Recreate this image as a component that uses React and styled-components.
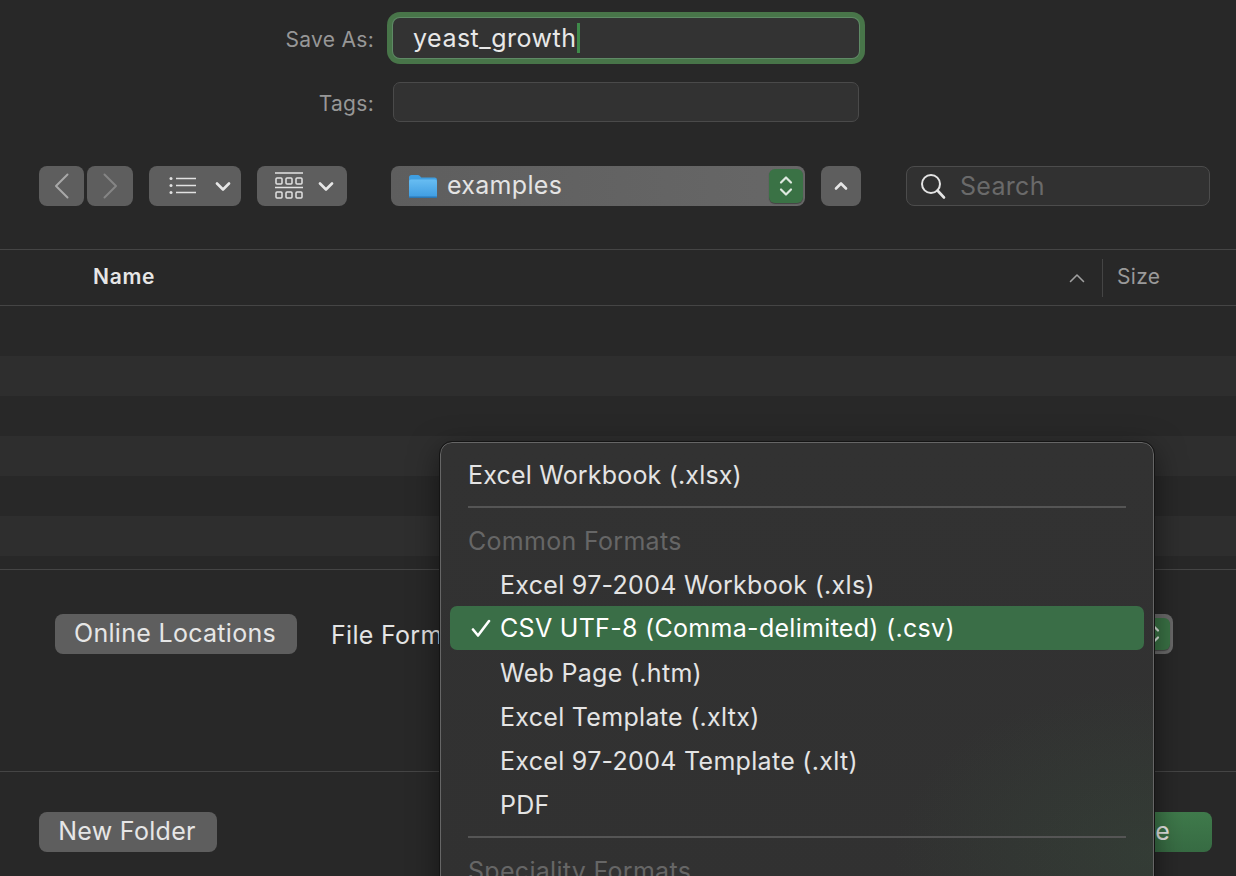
import React from 'react';
import styled, { createGlobalStyle } from 'styled-components';

const GlobalStyle = createGlobalStyle`
  html, body {
    margin: 0;
    padding: 0;
    background: #282828;
  }
  * {
    box-sizing: border-box;
  }
`;

const ROWS = [false, true, false, true, false, true];

const FORMATS = [
  { label: 'Excel Workbook (.xlsx)', kind: 'top' },
  { kind: 'separator' },
  { label: 'Common Formats', kind: 'heading' },
  { label: 'Excel 97-2004 Workbook (.xls)' },
  { label: 'CSV UTF-8 (Comma-delimited) (.csv)', selected: true },
  { label: 'Web Page (.htm)' },
  { label: 'Excel Template (.xltx)' },
  { label: 'Excel 97-2004 Template (.xlt)' },
  { label: 'PDF' },
  { kind: 'separator' },
  { label: 'Speciality Formats', kind: 'heading' },
];

function Stepper({ small }) {
  return (
    <StepperBox $small={small}>
      <svg width="16" height="24" viewBox="0 0 16 24" fill="none" stroke="#dfe9e0" strokeWidth="2.2" strokeLinecap="round" strokeLinejoin="round">
        <path d="M3 8.5 8 3.5l5 5" />
        <path d="M3 15.5l5 5 5-5" />
      </svg>
    </StepperBox>
  );
}

function Chevron({ up }) {
  return (
    <svg width="16" height="10" viewBox="0 0 16 10" fill="none" stroke="#e6e6e6" strokeWidth="2.6" strokeLinecap="round" strokeLinejoin="round">
      <path d={up ? 'M3 7.5 8 2.5l5 5' : 'M2 2.5l6 6 6-6'} />
    </svg>
  );
}

function FolderIcon() {
  return (
    <svg width="30" height="26" viewBox="0 0 30 26">
      <defs>
        <linearGradient id="folderFront" x1="0" y1="0" x2="0" y2="1">
          <stop offset="0" stopColor="#68bdf2" />
          <stop offset="1" stopColor="#3d9be0" />
        </linearGradient>
      </defs>
      <path d="M1 4.5A2.5 2.5 0 0 1 3.5 2h6.2c.9 0 1.6.4 2.2 1l1.3 1.4H26.5A2.5 2.5 0 0 1 29 6.9V12H1z" fill="#3f9fe2" />
      <rect x="1" y="6.5" width="28" height="18.5" rx="2" fill="url(#folderFront)" />
      <rect x="1" y="23.6" width="28" height="1.4" rx="0.7" fill="#2a77b4" />
    </svg>
  );
}

export default function App() {
  return (
    <Page>
      <GlobalStyle />
      <Form>
        <FormRow>
          <FieldLabel>Save As:</FieldLabel>
          <FocusedField>
            yeast_growth
            <Caret />
          </FocusedField>
        </FormRow>
        <FormRow>
          <FieldLabel>Tags:</FieldLabel>
          <TagsField />
        </FormRow>
      </Form>

      <Toolbar>
        <NavGroup>
          <NavButton $width={45} aria-label="Back">
            <svg width="18" height="28" viewBox="0 0 18 28" fill="none" stroke="#a8a8a8" strokeWidth="2" strokeLinecap="round" strokeLinejoin="round">
              <path d="M14.5 2.5 3 14l11.5 11.5" />
            </svg>
          </NavButton>
          <NavButton $width={46} aria-label="Forward">
            <svg width="18" height="28" viewBox="0 0 18 28" fill="none" stroke="#858585" strokeWidth="2" strokeLinecap="round" strokeLinejoin="round">
              <path d="M3.5 2.5 15 14 3.5 25.5" />
            </svg>
          </NavButton>
        </NavGroup>

        <ViewButton $width={92} $gap={18} $shift={9}>
          <svg width="28" height="20" viewBox="0 0 28 20" fill="none" stroke="#e2e2e2">
            <path d="M7 2.5h20M7 9.5h20M7 16.5h20" strokeWidth="1.6" />
            <circle cx="2" cy="2.5" r="1.5" fill="#e2e2e2" stroke="none" />
            <circle cx="2" cy="9.5" r="1.5" fill="#e2e2e2" stroke="none" />
            <circle cx="2" cy="16.5" r="1.5" fill="#e2e2e2" stroke="none" />
          </svg>
          <Chevron />
        </ViewButton>

        <ViewButton $width={90} $gap={15} $shift={5}>
          <svg width="28" height="28" viewBox="0 0 28 28" fill="none" stroke="#e2e2e2" strokeWidth="1.5">
            <path d="M0 1h28M0 15.5h28" strokeWidth="1.7" />
            <rect x="1" y="6" width="6" height="6" rx="1" />
            <rect x="11" y="6" width="6" height="6" rx="1" />
            <rect x="21" y="6" width="6" height="6" rx="1" />
            <rect x="1" y="20" width="6" height="6" rx="1" />
            <rect x="11" y="20" width="6" height="6" rx="1" />
            <rect x="21" y="20" width="6" height="6" rx="1" />
          </svg>
          <Chevron />
        </ViewButton>

        <PathPopup>
          <FolderIcon />
          <PathName>examples</PathName>
          <Stepper />
        </PathPopup>

        <UpButton aria-label="Enclosing folder">
          <Chevron up />
        </UpButton>

        <SearchField>
          <svg width="28" height="28" viewBox="0 0 28 28" fill="none" stroke="#e4e4e4" strokeLinecap="round">
            <circle cx="12" cy="12" r="9" strokeWidth="2" />
            <path d="M18.5 18.5 25 25.5" strokeWidth="2.6" />
          </svg>
          <SearchPlaceholder>Search</SearchPlaceholder>
        </SearchField>
      </Toolbar>

      <ColumnHeader>
        <NameColumn>Name</NameColumn>
        <SortArrow>
          <svg width="16" height="10" viewBox="0 0 16 10" fill="none" stroke="#a0a0a0" strokeWidth="1.6" strokeLinecap="round" strokeLinejoin="round">
            <path d="M1.5 8.5 8 2l6.5 6.5" />
          </svg>
        </SortArrow>
        <SizeColumn>Size</SizeColumn>
      </ColumnHeader>

      <FileList>
        {ROWS.map((striped, i) => (
          <FileRow key={i} $striped={striped} />
        ))}
      </FileList>

      <OptionsBar>
        <Button $width={242}>Online Locations</Button>
        <FormatLabel>File Format:</FormatLabel>
        <FormatPopup>
          <Stepper small />
        </FormatPopup>
      </OptionsBar>

      <ActionBar>
        <Button $width={178}>New Folder</Button>
        <SaveButton>Save</SaveButton>
      </ActionBar>

      <Menu>
        {FORMATS.map((item, i) => {
          if (item.kind === 'separator') return <MenuSeparator key={i} />;
          if (item.kind === 'heading') return <MenuHeading key={i}>{item.label}</MenuHeading>;
          if (item.kind === 'top') return <MenuTop key={i}>{item.label}</MenuTop>;
          return (
            <MenuItem key={i} $selected={item.selected}>
              {item.selected && (
                <Check>
                  <svg width="20" height="18" viewBox="0 0 20 18" fill="none" stroke="#fff" strokeWidth="2.6" strokeLinecap="round" strokeLinejoin="round">
                    <path d="M2 10.5 7 16.5 18 2" />
                  </svg>
                </Check>
              )}
              {item.label}
            </MenuItem>
          );
        })}
      </Menu>
    </Page>
  );
}

const Page = styled.div`
  position: relative;
  width: 1236px;
  height: 876px;
  overflow: hidden;
  background: #282828;
  color: #e4e4e4;
  font-family: Inter, "Liberation Sans", sans-serif;
  font-size: 25px;
  letter-spacing: 0.3px;
`;

const Form = styled.div`
  display: flex;
  flex-direction: column;
  gap: 24px;
  padding-top: 18px;
`;

const FormRow = styled.div`
  display: flex;
  align-items: center;
  gap: 19px;
  height: 40px;
`;

const FieldLabel = styled.div`
  width: 374px;
  padding-top: 2px;
  text-align: right;
  font-size: 21px;
  letter-spacing: 0.3px;
  color: #979797;
`;

const FocusedField = styled.div`
  display: flex;
  align-items: center;
  width: 466px;
  height: 40px;
  padding-left: 20px;
  border-radius: 7px;
  background: #333333;
  box-shadow: 0 0 0 1px #5f8a66, 0 0 0 6px #487549;
  font-size: 25px;
  letter-spacing: 0.5px;
  color: #e8e8e8;
`;

const Caret = styled.span`
  width: 3px;
  height: 30px;
  margin-left: 1px;
  background: #3f8a4a;
`;

const TagsField = styled.div`
  width: 466px;
  height: 40px;
  border-radius: 7px;
  background: #323232;
  border: 1px solid #4a4a4a;
`;

const Toolbar = styled.div`
  display: flex;
  align-items: center;
  height: 40px;
  margin-top: 44px;
  padding-left: 39px;
`;

const NavGroup = styled.div`
  display: flex;
  gap: 3px;
  margin-right: 16px;
`;

const NavButton = styled.div`
  display: flex;
  align-items: center;
  justify-content: center;
  width: ${(p) => p.$width}px;
  height: 40px;
  border-radius: 8px;
  background: #5e5e5e;
`;

const ViewButton = styled.div`
  display: flex;
  align-items: center;
  justify-content: center;
  gap: ${(p) => p.$gap}px;
  width: ${(p) => p.$width}px;
  height: 40px;
  margin-right: 16px;
  padding-left: ${(p) => p.$shift}px;
  border-radius: 8px;
  background: #5e5e5e;
`;

const PathPopup = styled.div`
  display: flex;
  align-items: center;
  width: 414px;
  height: 40px;
  margin-left: 28px;
  padding: 0 2px 0 17px;
  border-radius: 8px;
  background: linear-gradient(90deg, #5e5e5e, #676767);
`;

const PathName = styled.span`
  flex: 1;
  margin-left: 9px;
  padding-bottom: 2px;
  font-size: 25px;
  color: #e4e4e4;
`;

const StepperBox = styled.div`
  display: flex;
  align-items: center;
  justify-content: center;
  width: 34px;
  height: ${(p) => (p.$small ? 32 : 34)}px;
  border-radius: 6px;
  background: #3a7245;
  box-shadow: 0 1px 1px rgba(0, 0, 0, 0.35);
`;

const UpButton = styled.div`
  display: flex;
  align-items: center;
  justify-content: center;
  width: 40px;
  height: 40px;
  margin-left: 16px;
  border-radius: 8px;
  background: #5e5e5e;
`;

const SearchField = styled.div`
  display: flex;
  align-items: center;
  gap: 13px;
  width: 304px;
  height: 40px;
  margin-left: 45px;
  padding-left: 12px;
  border-radius: 8px;
  background: #313131;
  border: 1px solid #4c4c4c;
`;

const SearchPlaceholder = styled.span`
  font-size: 25px;
  color: #6a6a6a;
`;

const ColumnHeader = styled.div`
  display: flex;
  align-items: center;
  height: 57px;
  margin-top: 43px;
  padding-left: 93px;
  border-top: 1px solid #454545;
  border-bottom: 1px solid #454545;
`;

const NameColumn = styled.div`
  flex: 1;
  padding-bottom: 2px;
  font-size: 21px;
  font-weight: 600;
  letter-spacing: 0.7px;
  color: #e6e6e6;
`;

const SortArrow = styled.div`
  display: flex;
  margin-right: 17px;
`;

const SizeColumn = styled.div`
  width: 134px;
  height: 38px;
  line-height: 36px;
  padding-left: 14px;
  border-left: 1px solid #454545;
  font-size: 21px;
  color: #9a9a9a;
`;

const FileList = styled.div`
  height: 264px;
  padding-top: 10px;
  border-bottom: 1px solid #454545;
`;

const FileRow = styled.div`
  height: 40px;
  background: ${(p) => (p.$striped ? '#2e2e2e' : 'transparent')};
`;

const OptionsBar = styled.div`
  display: flex;
  align-items: flex-start;
  height: 202px;
  padding: 44px 63px 0 55px;
  border-bottom: 1px solid #454545;
`;

const Button = styled.div`
  display: flex;
  align-items: center;
  justify-content: center;
  width: ${(p) => p.$width}px;
  height: 40px;
  padding: 0 2px 2px 0;
  border-radius: 8px;
  background: #5e5e5e;
  font-size: 25px;
  color: #e6e6e6;
`;

const FormatLabel = styled.div`
  margin-left: 34px;
  margin-top: 1px;
  font-size: 25px;
  line-height: 40px;
  color: #e4e4e4;
`;

const FormatPopup = styled.div`
  flex: 1;
  display: flex;
  justify-content: flex-end;
  align-items: center;
  height: 40px;
  margin-left: 10px;
  padding-right: 3px;
  border-radius: 8px;
  background: #6a6a6a;
`;

const ActionBar = styled.div`
  display: flex;
  align-items: center;
  justify-content: space-between;
  padding: 40px 24px 0 39px;
`;

const SaveButton = styled.div`
  display: flex;
  align-items: center;
  justify-content: center;
  width: 143px;
  height: 40px;
  padding-bottom: 2px;
  border-radius: 8px;
  background: linear-gradient(180deg, #3f7a4b, #376b43);
  font-size: 25px;
  color: #e6e6e6;
`;

/* the open pop-up lies over the dialog and runs past the window bottom */
const Menu = styled.div`
  position: absolute;
  left: 440px;
  top: 442px;
  width: 714px;
  height: 480px;
  padding: 10px 9px;
  border-radius: 12px;
  border: 1px solid #666666;
  outline: 1px solid #141414;
  background:
    radial-gradient(ellipse 260px 170px at 100% 86%, rgba(60, 100, 68, 0.22), transparent),
    linear-gradient(180deg, #323232, #313131);
  box-shadow: 0 8px 30px rgba(0, 0, 0, 0.5);
`;

const MenuTop = styled.div`
  display: flex;
  align-items: center;
  height: 44px;
  padding-left: 18px;
  font-size: 25px;
  letter-spacing: 0.18px;
  color: #e4e4e4;
`;

const MenuSeparator = styled.div`
  height: 2px;
  margin: 9px 18px 11px;
  background: #555555;
`;

const MenuHeading = styled.div`
  display: flex;
  align-items: center;
  height: 44px;
  padding-left: 18px;
  font-size: 25px;
  color: #666666;
`;

const MenuItem = styled.div`
  position: relative;
  display: flex;
  align-items: center;
  height: 44px;
  margin: ${(p) => (p.$selected ? '-1px 0 1px' : '0')};
  padding-left: 50px;
  border-radius: 7px;
  font-size: 25px;
  color: ${(p) => (p.$selected ? '#ffffff' : '#e4e4e4')};
  background: ${(p) => (p.$selected ? '#3a6e47' : 'transparent')};
`;

const Check = styled.span`
  position: absolute;
  left: 21px;
  top: 13px;
  display: flex;
`;
